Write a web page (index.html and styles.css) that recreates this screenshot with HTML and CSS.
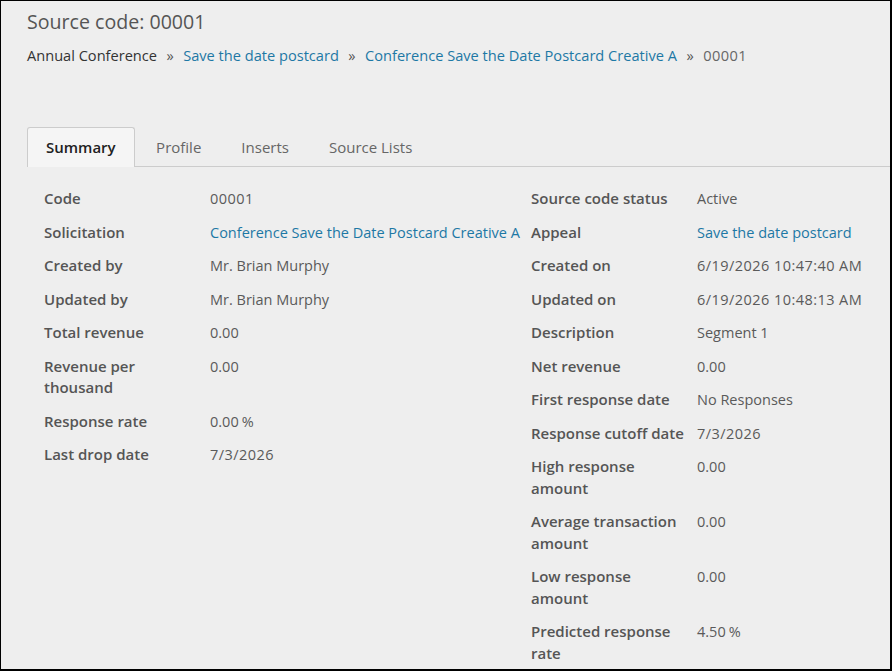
FILE: index.html
```html
<!DOCTYPE html>
<html lang="en">
<head>
    <meta charset="UTF-8">
    <title>Source code: 00001</title>
    <link rel="stylesheet" href="styles.css">
</head>
<body>
    <div class="page">
        <h1 class="page-title">Source code: 00001</h1>
        <div class="breadcrumbs">
            <span class="crumb">Annual Conference</span>
            <span class="sep">&raquo;</span>
            <a class="crumb link" href="#">Save the date postcard</a>
            <span class="sep">&raquo;</span>
            <a class="crumb link" href="#">Conference Save the Date Postcard Creative A</a>
            <span class="sep">&raquo;</span>
            <span class="crumb current num">00001</span>
        </div>

        <div class="tabs">
            <div class="tab active">Summary</div>
            <div class="tab">Profile</div>
            <div class="tab">Inserts</div>
            <div class="tab">Source Lists</div>
        </div>

        <div class="summary">
            <div class="field-list">
                <div class="field"><div class="label">Code</div><div class="value num">00001</div></div>
                <div class="field"><div class="label">Solicitation</div><div class="value"><a class="link" href="#">Conference Save the Date Postcard Creative A</a></div></div>
                <div class="field"><div class="label">Created by</div><div class="value">Mr. Brian Murphy</div></div>
                <div class="field"><div class="label">Updated by</div><div class="value">Mr. Brian Murphy</div></div>
                <div class="field"><div class="label">Total revenue</div><div class="value">0.00</div></div>
                <div class="field"><div class="label">Revenue per thousand</div><div class="value">0.00</div></div>
                <div class="field"><div class="label">Response rate</div><div class="value">0.00<span class="pct">%</span></div></div>
                <div class="field"><div class="label">Last drop date</div><div class="value num">7/3/2026</div></div>
            </div>
            <div class="field-list">
                <div class="field"><div class="label">Source code status</div><div class="value">Active</div></div>
                <div class="field"><div class="label">Appeal</div><div class="value"><a class="link" href="#">Save the date postcard</a></div></div>
                <div class="field"><div class="label">Created on</div><div class="value num">6/19/2026 10:47:40 AM</div></div>
                <div class="field"><div class="label">Updated on</div><div class="value num">6/19/2026 10:48:13 AM</div></div>
                <div class="field"><div class="label">Description</div><div class="value">Segment 1</div></div>
                <div class="field"><div class="label">Net revenue</div><div class="value">0.00</div></div>
                <div class="field"><div class="label">First response date</div><div class="value">No Responses</div></div>
                <div class="field"><div class="label">Response cutoff date</div><div class="value num">7/3/2026</div></div>
                <div class="field"><div class="label">High response amount</div><div class="value">0.00</div></div>
                <div class="field"><div class="label">Average transaction amount</div><div class="value">0.00</div></div>
                <div class="field"><div class="label">Low response amount</div><div class="value">0.00</div></div>
                <div class="field"><div class="label">Predicted response rate</div><div class="value">4.50<span class="pct">%</span></div></div>
            </div>
        </div>
    </div>
</body>
</html>
```

FILE: styles.css
```css
body {
    margin: 0;
    font-family: "Open Sans", "Liberation Sans", sans-serif;
    color: #555;
    background-color: #eee;
}

.page {
    box-sizing: border-box;
    height: 100vh;
    overflow: hidden;
    border-style: solid;
    border-color: #000;
    border-width: 1px 2px 2px 1px;
    background-color: #eee;
}

.page-title {
    margin: 0;
    padding: 7px 0 0 26px;
    font-size: 19.6px;
    font-weight: 400;
    line-height: 28px;
    color: #555;
}

.breadcrumbs {
    display: flex;
    align-items: center;
    padding: 8px 0 0 26px;
    font-size: 14.6px;
    line-height: 22px;
}

.crumb {
    color: #333;
    text-decoration: none;
}

.crumb.current {
    color: #666;
}

.link {
    color: #1d78a5;
    text-decoration: none;
}

.sep {
    padding: 0 9.5px;
    color: #555;
}

.num {
    letter-spacing: 0.45px;
}

/* tabs */
.tabs {
    display: flex;
    margin: 61px 0 0 26px;
    border-bottom: 1px solid #ccc;
}

.tab {
    padding: 8px 19px;
    font-size: 15px;
    line-height: 22px;
    color: #666;
    border: 1px solid transparent;
    border-bottom: none;
    border-radius: 3px 3px 0 0;
    margin-bottom: -1px;
}

    .tab.active {
        color: #212121;
        font-weight: 600;
        background-color: #f5f5f5;
        border-color: #ccc;
        padding: 8px 18px 9px;
        margin-right: 1.5px;
    }

/* summary fields */
.summary {
    display: grid;
    grid-template-columns: 487px 1fr;
    padding: 21px 0 0 43px;
}

.field {
    display: grid;
    grid-template-columns: 166px 1fr;
    margin-bottom: 12px;
    font-size: 14.5px;
    line-height: 21.5px;
}

.label {
    font-size: 15px;
    font-weight: 600;
    color: #555;
    padding-right: 10px;
}

.value {
    color: #5a5a5a;
    white-space: nowrap;
}

.pct {
    margin-left: 3px;
}
```
